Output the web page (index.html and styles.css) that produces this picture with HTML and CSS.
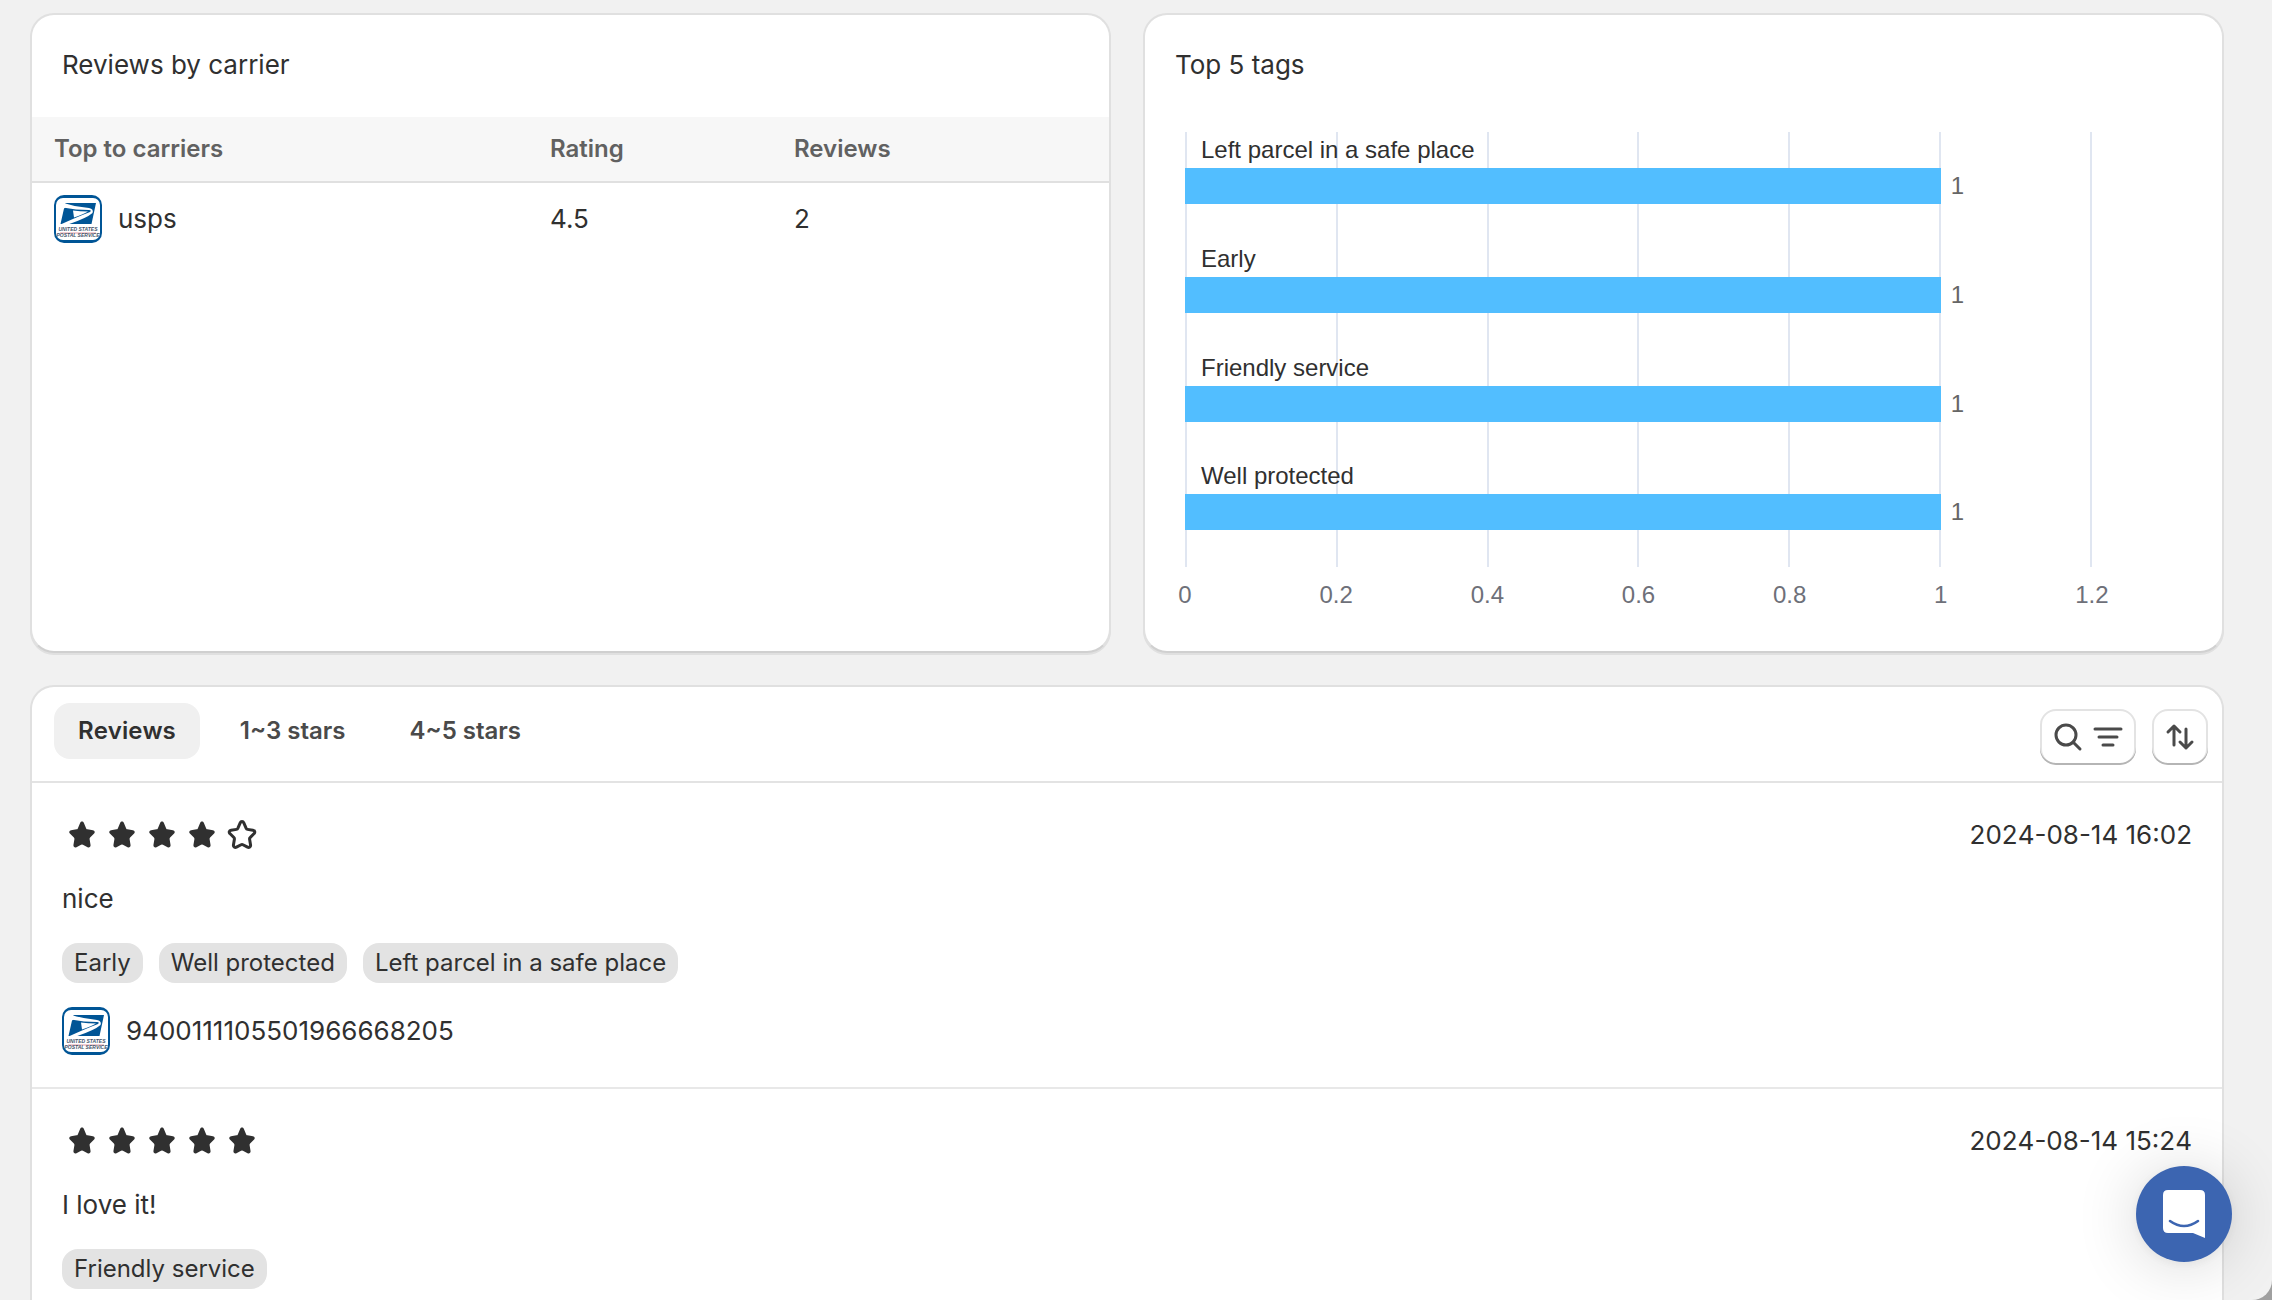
FILE: index.html
```html
<!DOCTYPE html>
<html lang="en">
<head>
<meta charset="utf-8">
<title>Reviews</title>
<link rel="stylesheet" href="styles.css">
</head>
<body>
<svg class="symbols" aria-hidden="true">
  <symbol id="usps" viewBox="0 0 48 48">
    <rect width="48" height="48" rx="10" fill="#005596"/>
    <rect x="2" y="3" width="44" height="42" rx="7" fill="#fff"/>
    <path d="M11 8H42L37.500 29H6.500L10 13.500Q14 12 11 8Z" fill="#005596"/>
    <path d="M8 7.500Q20 11.500 35 13Q40 14 38.500 18Q33 23 14 29.500H6.500Q23 22 36 17Q38 15 35 15Q22 15 9 12.500Z" fill="#fff"/>
    <path d="M19 15.500Q26 16.500 34 16.500Q29 19.500 20 22.500Z" fill="#fff"/>
    <path d="M6 38H42" stroke="#e39aa4" stroke-width="1"/>
  </symbol>
  <symbol id="star" viewBox="0 0 20 20">
    <path d="M9.100 3.900c.340-.800 1.460-.800 1.800 0l1.200 2.800c.120.260.350.440.630.480l2.760.400c.860.120 1.180 1.120.560 1.700l-2 2c-.210.200-.300.500-.250.790l.480 2.930c.140.850-.740 1.490-1.500 1.090l-2.320-1.220a.980.980 0 0 0-.920 0l-2.320 1.220c-.760.400-1.640-.240-1.500-1.090l.480-2.930a.930.930 0 0 0-.250-.790l-2-2c-.620-.580-.300-1.580.560-1.700l2.760-.400c.280-.040.510-.220.630-.480z"/>
  </symbol>
</svg>
<main class="page">
  <div class="summary">
    <section class="card">
      <h2 class="card-title">Reviews by carrier</h2>
      <table class="carriers">
        <thead><tr><th class="col-name">Top to carriers</th><th class="col-rating">Rating</th><th>Reviews</th></tr></thead>
        <tbody><tr><td><span class="carrier"><svg class="carrier-logo" viewBox="0 0 48 48" aria-hidden="true"><use href="#usps"/><text x="24" y="36" text-anchor="middle">UNITED STATES</text><text x="24" y="42" text-anchor="middle">POSTAL SERVICE</text></svg>usps</span></td><td>4.5</td><td>2</td></tr></tbody>
      </table>
    </section>
    <section class="card">
      <h2 class="card-title">Top 5 tags</h2>
      <div class="chart">
        <div class="plot">
          <div class="grid-lines"><i></i><i></i><i></i><i></i><i></i><i></i></div>
          <div class="bands">
            <div class="band"><span class="band-label">Left parcel in a safe place</span><div class="band-row"><div class="bar" style="width:83.33%"></div><span>1</span></div></div>
            <div class="band"><span class="band-label">Early</span><div class="band-row"><div class="bar" style="width:83.33%"></div><span>1</span></div></div>
            <div class="band"><span class="band-label">Friendly service</span><div class="band-row"><div class="bar" style="width:83.33%"></div><span>1</span></div></div>
            <div class="band"><span class="band-label">Well protected</span><div class="band-row"><div class="bar" style="width:83.33%"></div><span>1</span></div></div>
          </div>
        </div>
        <div class="axis"><span>0</span><span>0.2</span><span>0.4</span><span>0.6</span><span>0.8</span><span>1</span><span>1.2</span></div>
      </div>
    </section>
  </div>
  <section class="card reviews">
    <header class="toolbar">
      <nav class="tabs">
        <button class="tab tab-active" type="button">Reviews</button>
        <button class="tab" type="button">1~3 stars</button>
        <button class="tab" type="button">4~5 stars</button>
      </nav>
      <div class="tools">
        <button class="tool" type="button" aria-label="Search and filter">
          <svg viewBox="0 0 40 40"><circle cx="18" cy="18" r="10"/><path d="M25 25l7 7"/></svg>
          <svg viewBox="0 0 40 40"><path d="M7 12H33M11 20H29M15 28H25"/></svg>
        </button>
        <button class="tool" type="button" aria-label="Sort">
          <svg viewBox="0 0 40 40"><path d="M14 28V9M8 15L14 9L20 15M26 12V31M20 25L26 31L32 25"/></svg>
        </button>
      </div>
    </header>
    <article class="review">
      <div class="review-head">
        <div class="stars" role="img" aria-label="4 of 5 stars"><svg><use href="#star"/></svg><svg><use href="#star"/></svg><svg><use href="#star"/></svg><svg><use href="#star"/></svg><svg class="star-empty"><use href="#star"/></svg></div>
        <time>2024-08-14 16:02</time>
      </div>
      <p>nice</p>
      <div class="tags"><span class="tag">Early</span><span class="tag">Well protected</span><span class="tag">Left parcel in a safe place</span></div>
      <div class="carrier"><svg class="carrier-logo" viewBox="0 0 48 48" aria-hidden="true"><use href="#usps"/><text x="24" y="36" text-anchor="middle">UNITED STATES</text><text x="24" y="42" text-anchor="middle">POSTAL SERVICE</text></svg><span class="tracking">9400111105501966668205</span></div>
    </article>
    <article class="review">
      <div class="review-head">
        <div class="stars" role="img" aria-label="5 of 5 stars"><svg><use href="#star"/></svg><svg><use href="#star"/></svg><svg><use href="#star"/></svg><svg><use href="#star"/></svg><svg><use href="#star"/></svg></div>
        <time>2024-08-14 15:24</time>
      </div>
      <p>I love it!</p>
      <div class="tags"><span class="tag">Friendly service</span></div>
    </article>
  </section>
</main>
<button class="launcher" type="button" aria-label="Open chat">
  <svg viewBox="0 0 42 48"><path d="M5 0H37Q42 0 42 5V48L30 43H5Q0 43 0 38V5Q0 0 5 0Z" fill="#fff"/><path d="M7 31Q21 41 35 31" fill="none" stroke="#3c65b1" stroke-width="2.600" stroke-linecap="round"/></svg>
</button>
</body>
</html>
```
FILE: styles.css
```css
* { box-sizing: border-box; }
body {
  margin: 0;
  height: 100vh;
  overflow: hidden;
  background: #a0a0a0;
  color: #303030;
  font: 400 26px/40px Inter, "Liberation Sans", sans-serif;
}
h2, p { margin: 0; font-size: 26px; font-weight: 400; }
button { font: inherit; color: inherit; border: 0; cursor: pointer; }
.symbols { position: absolute; width: 0; height: 0; }

.page {
  display: flex;
  flex-direction: column;
  gap: 32px;
  height: 100vh;
  padding: 13px 48px 0 30px;
  overflow: hidden;
  background: #f1f1f1;
  border-radius: 0 0 20px 0;
}
.summary { display: grid; grid-template-columns: 1fr 1fr; gap: 32px; }
.card {
  min-width: 0;
  background: #fff;
  border: 2px solid #e0e0e0;
  border-bottom-color: #d0d0d0;
  border-radius: 24px;
  box-shadow: 0 2px 0 rgba(0, 0, 0, .07);
}
.summary .card { min-height: 640px; }
.card-title { padding: 30px 30px 32px; }

.carriers { width: 100%; border-spacing: 0; table-layout: fixed; text-align: left; }
.carriers th {
  height: 66px;
  padding: 0 22px;
  background: #f7f7f7;
  border-bottom: 2px solid #e0e0e0;
  color: #616161;
  font-size: 24px;
  font-weight: 600;
}
.carriers td { padding: 12px 22px; }
.carriers .col-name { width: 496px; }
.carriers .col-rating { width: 244px; }
.carrier { display: flex; align-items: center; gap: 16px; }
.carrier-logo { width: 48px; height: 48px; flex: none; }
.carrier-logo text { font: italic 700 5px "Liberation Sans", sans-serif; fill: #45546a; }

.chart { padding: 15px 130px 0 40px; font: 24px/36px "Liberation Sans", Arial, sans-serif; }
.plot { display: grid; height: 435px; }
.grid-lines, .bands { grid-area: 1 / 1; }
.grid-lines { display: grid; grid-template-columns: repeat(6, 1fr); border-left: 2px solid #e0e6f1; }
.grid-lines i { border-right: 2px solid #e0e6f1; }
.bands { display: grid; grid-template-rows: repeat(4, 1fr); z-index: 1; }
.band-label { display: block; height: 36px; padding-left: 16px; }
.band-row { display: flex; gap: 10px; color: #666; }
.bar { height: 36px; background: #52beff; }
.axis { display: flex; justify-content: space-between; padding-top: 10px; color: #6e7079; }
.axis span { display: flex; justify-content: center; width: 0; }

.reviews { flex: 1; border-bottom: 0; border-radius: 24px 24px 0 0; overflow: hidden; }
.toolbar {
  display: flex;
  justify-content: space-between;
  padding: 16px 14px 16px 22px;
  border-bottom: 2px solid #e3e3e3;
}
.tabs { display: flex; gap: 16px; }
.tab {
  height: 56px;
  padding: 0 24px;
  border-radius: 16px;
  background: none;
  color: #4a4a4a;
  font-size: 24px;
  font-weight: 600;
  font-kerning: none;
}
.tab-active { background: #f0f0f0; color: #303030; }
.tools { display: flex; gap: 16px; padding-top: 6px; }
.tool {
  display: flex;
  align-items: center;
  height: 56px;
  padding: 0 8px;
  background: #fff;
  border-radius: 16px;
  box-shadow: inset 0 -2px 0 #b5b5b5, inset 0 0 0 2px #e3e3e3;
}
.tool svg { width: 40px; height: 40px; fill: none; stroke: #4a4a4a; stroke-width: 3; stroke-linecap: round; stroke-linejoin: round; }

.review { display: flex; flex-direction: column; gap: 24px; padding: 32px 30px; }
.review + .review { border-top: 2px solid #e8e8e8; }
.review-head { display: flex; justify-content: space-between; }
.review-head time, .tracking { font-kerning: none; }
.stars { display: flex; }
.stars svg { width: 40px; height: 40px; fill: #303030; }
.stars .star-empty { fill: none; stroke: #303030; stroke-width: 1.500px; }
.tags { display: flex; gap: 16px; }
.tag { padding: 0 12px; border-radius: 16px; background: #e3e3e3; font-size: 24px; }

.launcher {
  position: fixed;
  right: 40px;
  bottom: 38px;
  display: grid;
  place-items: center;
  width: 96px;
  height: 96px;
  padding: 0;
  border-radius: 50%;
  background: #3c65b1;
  box-shadow: 0 2px 12px rgba(0, 0, 0, .06), 0 4px 64px rgba(0, 0, 0, .16);
}
.launcher svg { width: 42px; height: 48px; }
```
